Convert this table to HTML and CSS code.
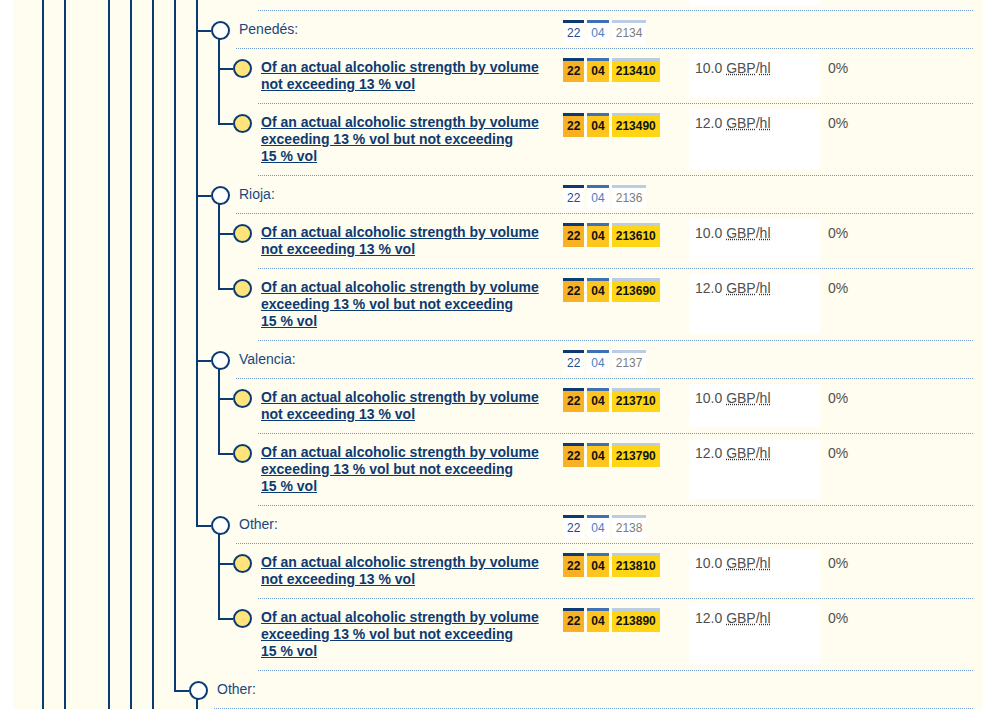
FILE: index.html
```html
<!DOCTYPE html>
<html lang="en">
<head>
<meta charset="utf-8">
<title>Tariff tree</title>
<link rel="stylesheet" href="styles.css">
</head>
<body>
<div class="page">

  <!-- tail of previous commodity (scrolled) -->
  <div class="row">
    <span class="g g-pipe"></span><span class="g g-pipe"></span><span class="g"></span><span class="g g-pipe"></span><span class="g g-pipe"></span><span class="g g-pipe"></span><span class="g g-pipe"></span>
    <span class="g g-pipe"></span><span class="g"></span><span class="g"></span>
    <div class="main main-cut">
      <div class="desc"></div>
      <div class="codes"></div>
      <div class="duty duty-cut"></div>
      <div class="pct"></div>
    </div>
  </div>

  <!-- Penedés -->
  <div class="row">
    <span class="g g-pipe"></span><span class="g g-pipe"></span><span class="g"></span><span class="g g-pipe"></span><span class="g g-pipe"></span><span class="g g-pipe"></span><span class="g g-pipe"></span>
    <span class="g g-tee"></span><span class="g node node-kids"><span class="dot"></span></span>
    <div class="main">
      <div class="desc title">Penedés:</div>
      <div class="codes codes-head"><span class="code c1">22</span><span class="code c2">04</span><span class="code c3">2134</span></div>
      <div class="duty duty-none"></div>
      <div class="pct"></div>
    </div>
  </div>
  <div class="row">
    <span class="g g-pipe"></span><span class="g g-pipe"></span><span class="g"></span><span class="g g-pipe"></span><span class="g g-pipe"></span><span class="g g-pipe"></span><span class="g g-pipe"></span>
    <span class="g g-pipe"></span><span class="g g-tee"></span><span class="g node"><span class="dot dot-leaf"></span></span>
    <div class="main">
      <div class="desc"><a href="#">Of an actual alcoholic strength by volume not exceeding 13&nbsp;%&nbsp;vol</a></div>
      <div class="codes codes-leaf"><span class="code c1">22</span><span class="code c2">04</span><span class="code c3">213410</span></div>
      <div class="duty">10.0 <abbr title="Pound sterling">GBP</abbr>/<abbr title="hectolitre">hl</abbr></div>
      <div class="pct">0%</div>
    </div>
  </div>
  <div class="row">
    <span class="g g-pipe"></span><span class="g g-pipe"></span><span class="g"></span><span class="g g-pipe"></span><span class="g g-pipe"></span><span class="g g-pipe"></span><span class="g g-pipe"></span>
    <span class="g g-pipe"></span><span class="g g-end"></span><span class="g node"><span class="dot dot-leaf"></span></span>
    <div class="main">
      <div class="desc"><a href="#">Of an actual alcoholic strength by volume exceeding 13&nbsp;%&nbsp;vol but not exceeding 15&nbsp;%&nbsp;vol</a></div>
      <div class="codes codes-leaf"><span class="code c1">22</span><span class="code c2">04</span><span class="code c3">213490</span></div>
      <div class="duty">12.0 <abbr title="Pound sterling">GBP</abbr>/<abbr title="hectolitre">hl</abbr></div>
      <div class="pct">0%</div>
    </div>
  </div>

  <!-- Rioja -->
  <div class="row">
    <span class="g g-pipe"></span><span class="g g-pipe"></span><span class="g"></span><span class="g g-pipe"></span><span class="g g-pipe"></span><span class="g g-pipe"></span><span class="g g-pipe"></span>
    <span class="g g-tee"></span><span class="g node node-kids"><span class="dot"></span></span>
    <div class="main">
      <div class="desc title">Rioja:</div>
      <div class="codes codes-head"><span class="code c1">22</span><span class="code c2">04</span><span class="code c3">2136</span></div>
      <div class="duty duty-none"></div>
      <div class="pct"></div>
    </div>
  </div>
  <div class="row">
    <span class="g g-pipe"></span><span class="g g-pipe"></span><span class="g"></span><span class="g g-pipe"></span><span class="g g-pipe"></span><span class="g g-pipe"></span><span class="g g-pipe"></span>
    <span class="g g-pipe"></span><span class="g g-tee"></span><span class="g node"><span class="dot dot-leaf"></span></span>
    <div class="main">
      <div class="desc"><a href="#">Of an actual alcoholic strength by volume not exceeding 13&nbsp;%&nbsp;vol</a></div>
      <div class="codes codes-leaf"><span class="code c1">22</span><span class="code c2">04</span><span class="code c3">213610</span></div>
      <div class="duty">10.0 <abbr title="Pound sterling">GBP</abbr>/<abbr title="hectolitre">hl</abbr></div>
      <div class="pct">0%</div>
    </div>
  </div>
  <div class="row">
    <span class="g g-pipe"></span><span class="g g-pipe"></span><span class="g"></span><span class="g g-pipe"></span><span class="g g-pipe"></span><span class="g g-pipe"></span><span class="g g-pipe"></span>
    <span class="g g-pipe"></span><span class="g g-end"></span><span class="g node"><span class="dot dot-leaf"></span></span>
    <div class="main">
      <div class="desc"><a href="#">Of an actual alcoholic strength by volume exceeding 13&nbsp;%&nbsp;vol but not exceeding 15&nbsp;%&nbsp;vol</a></div>
      <div class="codes codes-leaf"><span class="code c1">22</span><span class="code c2">04</span><span class="code c3">213690</span></div>
      <div class="duty">12.0 <abbr title="Pound sterling">GBP</abbr>/<abbr title="hectolitre">hl</abbr></div>
      <div class="pct">0%</div>
    </div>
  </div>

  <!-- Valencia -->
  <div class="row">
    <span class="g g-pipe"></span><span class="g g-pipe"></span><span class="g"></span><span class="g g-pipe"></span><span class="g g-pipe"></span><span class="g g-pipe"></span><span class="g g-pipe"></span>
    <span class="g g-tee"></span><span class="g node node-kids"><span class="dot"></span></span>
    <div class="main">
      <div class="desc title">Valencia:</div>
      <div class="codes codes-head"><span class="code c1">22</span><span class="code c2">04</span><span class="code c3">2137</span></div>
      <div class="duty duty-none"></div>
      <div class="pct"></div>
    </div>
  </div>
  <div class="row">
    <span class="g g-pipe"></span><span class="g g-pipe"></span><span class="g"></span><span class="g g-pipe"></span><span class="g g-pipe"></span><span class="g g-pipe"></span><span class="g g-pipe"></span>
    <span class="g g-pipe"></span><span class="g g-tee"></span><span class="g node"><span class="dot dot-leaf"></span></span>
    <div class="main">
      <div class="desc"><a href="#">Of an actual alcoholic strength by volume not exceeding 13&nbsp;%&nbsp;vol</a></div>
      <div class="codes codes-leaf"><span class="code c1">22</span><span class="code c2">04</span><span class="code c3">213710</span></div>
      <div class="duty">10.0 <abbr title="Pound sterling">GBP</abbr>/<abbr title="hectolitre">hl</abbr></div>
      <div class="pct">0%</div>
    </div>
  </div>
  <div class="row">
    <span class="g g-pipe"></span><span class="g g-pipe"></span><span class="g"></span><span class="g g-pipe"></span><span class="g g-pipe"></span><span class="g g-pipe"></span><span class="g g-pipe"></span>
    <span class="g g-pipe"></span><span class="g g-end"></span><span class="g node"><span class="dot dot-leaf"></span></span>
    <div class="main">
      <div class="desc"><a href="#">Of an actual alcoholic strength by volume exceeding 13&nbsp;%&nbsp;vol but not exceeding 15&nbsp;%&nbsp;vol</a></div>
      <div class="codes codes-leaf"><span class="code c1">22</span><span class="code c2">04</span><span class="code c3">213790</span></div>
      <div class="duty">12.0 <abbr title="Pound sterling">GBP</abbr>/<abbr title="hectolitre">hl</abbr></div>
      <div class="pct">0%</div>
    </div>
  </div>

  <!-- Other (last of its group) -->
  <div class="row">
    <span class="g g-pipe"></span><span class="g g-pipe"></span><span class="g"></span><span class="g g-pipe"></span><span class="g g-pipe"></span><span class="g g-pipe"></span><span class="g g-pipe"></span>
    <span class="g g-end"></span><span class="g node node-kids"><span class="dot"></span></span>
    <div class="main">
      <div class="desc title">Other:</div>
      <div class="codes codes-head"><span class="code c1">22</span><span class="code c2">04</span><span class="code c3">2138</span></div>
      <div class="duty duty-none"></div>
      <div class="pct"></div>
    </div>
  </div>
  <div class="row">
    <span class="g g-pipe"></span><span class="g g-pipe"></span><span class="g"></span><span class="g g-pipe"></span><span class="g g-pipe"></span><span class="g g-pipe"></span><span class="g g-pipe"></span>
    <span class="g"></span><span class="g g-tee"></span><span class="g node"><span class="dot dot-leaf"></span></span>
    <div class="main">
      <div class="desc"><a href="#">Of an actual alcoholic strength by volume not exceeding 13&nbsp;%&nbsp;vol</a></div>
      <div class="codes codes-leaf"><span class="code c1">22</span><span class="code c2">04</span><span class="code c3">213810</span></div>
      <div class="duty">10.0 <abbr title="Pound sterling">GBP</abbr>/<abbr title="hectolitre">hl</abbr></div>
      <div class="pct">0%</div>
    </div>
  </div>
  <div class="row">
    <span class="g g-pipe"></span><span class="g g-pipe"></span><span class="g"></span><span class="g g-pipe"></span><span class="g g-pipe"></span><span class="g g-pipe"></span><span class="g g-pipe"></span>
    <span class="g"></span><span class="g g-end"></span><span class="g node"><span class="dot dot-leaf"></span></span>
    <div class="main">
      <div class="desc"><a href="#">Of an actual alcoholic strength by volume exceeding 13&nbsp;%&nbsp;vol but not exceeding 15&nbsp;%&nbsp;vol</a></div>
      <div class="codes codes-leaf"><span class="code c1">22</span><span class="code c2">04</span><span class="code c3">213890</span></div>
      <div class="duty">12.0 <abbr title="Pound sterling">GBP</abbr>/<abbr title="hectolitre">hl</abbr></div>
      <div class="pct">0%</div>
    </div>
  </div>

  <!-- Other (one level up) -->
  <div class="row">
    <span class="g g-pipe"></span><span class="g g-pipe"></span><span class="g"></span><span class="g g-pipe"></span><span class="g g-pipe"></span><span class="g g-pipe"></span>
    <span class="g g-end"></span><span class="g node node-kids"><span class="dot"></span></span>
    <div class="main">
      <div class="desc title">Other:</div>
      <div class="codes"></div>
      <div class="duty duty-none"></div>
      <div class="pct"></div>
    </div>
  </div>

</div>
</body>
</html>
```
FILE: styles.css
```css
* {
  box-sizing: border-box;
}

html,
body {
  margin: 0;
  padding: 0;
  background: #ffffff;
  height: 709px;
  overflow: hidden;
}

body {
  font-family: "Liberation Sans", Arial, sans-serif;
  font-size: 14px;
  line-height: 17px;
  color: #444444;
  --line: #0b3a73;
}

.page {
  margin-left: 13px;
  width: 970px;
  background: #fffdf0;
  padding: 0 10px 0 22px;
}

.row {
  display: flex;
  align-items: stretch;
}

/* tree guide cells */
.g {
  flex: 0 0 22px;
  width: 22px;
}

.g-pipe {
  background: linear-gradient(var(--line), var(--line)) 7px 0 / 2px 100% no-repeat;
}

.g-tee {
  background:
    linear-gradient(var(--line), var(--line)) 7px 0 / 2px 100% no-repeat,
    linear-gradient(var(--line), var(--line)) 7px 19px / 15px 2px no-repeat;
}

.g-end {
  background:
    linear-gradient(var(--line), var(--line)) 7px 0 / 2px 21px no-repeat,
    linear-gradient(var(--line), var(--line)) 7px 19px / 15px 2px no-repeat;
}

.node-kids {
  background: linear-gradient(var(--line), var(--line)) 7px 20px / 2px 100% no-repeat;
}

.dot {
  display: block;
  width: 19px;
  height: 19px;
  margin-top: 10px;
  border: 2px solid var(--line);
  border-radius: 50%;
  background: #ffffff;
}

.dot-leaf {
  background: #ffe47c;
}

/* row content */
.main {
  flex: 1;
  min-width: 0;
  display: flex;
  margin-left: 3px;
  border-bottom: 1px dotted #6f98cc;
}

.main-cut {
  height: 11px;
}

.desc {
  flex: 1 1 auto;
  min-width: 0;
  padding: 10px 17px 10px 3px;
}

.title {
  color: #1a4680;
}

.desc a {
  color: #0e3a72;
  font-weight: bold;
  text-decoration: underline;
}

.codes {
  flex: 0 0 126px;
  display: flex;
  align-items: flex-start;
  gap: 3px;
  padding-top: 9px;
}

.code {
  display: block;
  height: 24px;
  padding: 0 4px;
  border-top: 3px solid;
  font-size: 12px;
  line-height: 21px;
}

.c1 {
  border-top-color: #0b3a73;
}

.c2 {
  border-top-color: #3e71b4;
}

.c3 {
  border-top-color: #bccde3;
}

.codes-head .code {
  background: #ffffff;
}

.codes-head .c1 {
  color: #1e4c88;
}

.codes-head .c2 {
  color: #4b7fc0;
}

.codes-head .c3 {
  color: #7d7d7d;
}

.codes-leaf .code {
  font-weight: bold;
  color: #111111;
}

.codes-leaf .c1 {
  background: #f8b124;
}

.codes-leaf .c2 {
  background: #fdc51d;
}

.codes-leaf .c3 {
  background: #ffd616;
}

.duty {
  flex: 0 0 131px;
  margin: 5px 0 6px;
  padding: 6px 6px 4px;
  background: #ffffff;
  color: #505050;
}

.duty-none {
  background: transparent;
}

.duty-cut {
  margin: 0 0 5px;
  padding: 0;
}

.duty abbr {
  text-decoration: underline dotted;
  text-decoration-color: #333333;
}

.pct {
  flex: 0 0 153px;
  padding: 11px 0 0 8px;
  color: #505050;
}
```
